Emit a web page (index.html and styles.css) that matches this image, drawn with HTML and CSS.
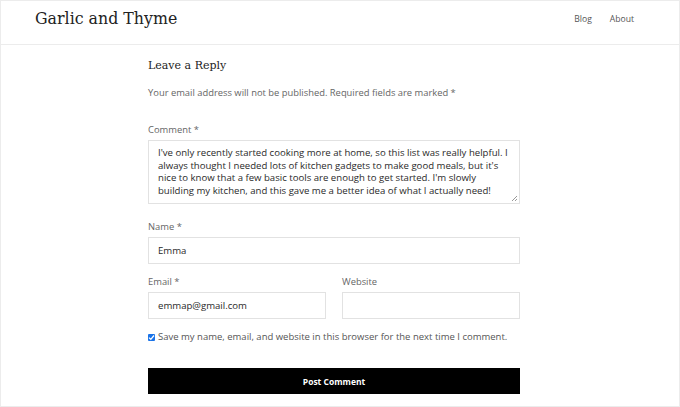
FILE: index.html
```html
<!DOCTYPE html>
<html lang="en">
<head>
<meta charset="utf-8">
<title>Garlic and Thyme</title>
<link rel="stylesheet" href="styles.css">
</head>
<body>
<div class="frame">
  <header class="site-header">
    <div class="site-title">Garlic and Thyme</div>
    <nav class="nav">
      <a href="#">Blog</a>
      <a href="#">About</a>
    </nav>
  </header>
  <main class="content">
    <h3 class="reply-title">Leave a Reply</h3>
    <p class="notes">Your email address will not be published. Required fields are marked *</p>
    <form class="comment-form">
      <div class="field">
        <label class="label">Comment *</label>
        <div class="textarea">I've only recently started cooking more at home, so this list was really helpful. I always thought I needed lots of kitchen gadgets to make good meals, but it's nice to know that a few basic tools are enough to get started. I'm slowly building my kitchen, and this gave me a better idea of what I actually need!<svg class="grip" width="7" height="7" viewBox="0 0 7 7"><path d="M6 1L1 6M6 4L4 6" stroke="#999" stroke-width="1"/></svg></div>
      </div>
      <div class="field name-field">
        <label class="label">Name *</label>
        <div class="input">Emma</div>
      </div>
      <div class="row">
        <div class="field">
          <label class="label">Email *</label>
          <div class="input">emmap@gmail.com</div>
        </div>
        <div class="field">
          <label class="label">Website</label>
          <div class="input"></div>
        </div>
      </div>
      <label class="consent"><span class="check"><svg width="7" height="7" viewBox="0 0 7 7"><path d="M1 3.6L2.8 5.3L6 1.5" stroke="#fff" stroke-width="1.3" fill="none"/></svg></span>Save my name, email, and website in this browser for the next time I comment.</label>
      <div class="button">Post Comment</div>
    </form>
  </main>
</div>
</body>
</html>
```
FILE: styles.css
```css
* { box-sizing: border-box; }
html, body { margin: 0; padding: 0; background: #fff; }
body { font-family: "Open Sans", sans-serif; color: #333; }
.frame {
  width: 680px;
  height: 407px;
  border: 1px solid #ececec;
  overflow: hidden;
}
.site-header {
  height: 44px;
  border-bottom: 1px solid #ececec;
  display: flex;
  align-items: center;
  justify-content: space-between;
  padding: 0 45px 0 34px;
}
.site-title {
  font-family: "DejaVu Serif", serif;
  font-size: 15.8px;
  color: #222;
  margin-top: -8px;
}
.nav { display: flex; gap: 18px; margin-top: -8px; }
.nav a { font-size: 8.6px; color: #555; text-decoration: none; }
.content { width: 372px; margin: 0 0 0 147px; }
.reply-title {
  font-family: "DejaVu Serif", serif;
  font-weight: normal;
  font-size: 11px;
  color: #222;
  margin: 14px 0 0;
  line-height: 14px;
}
.notes { font-size: 9.4px; color: #666; margin: 13px 0 0; line-height: 14px; }
.comment-form { margin-top: 23px; display: flex; flex-direction: column; }
.field { display: flex; flex-direction: column; }
.label { font-size: 9.4px; color: #666; line-height: 14px; margin-bottom: 3px; }
.textarea {
  position: relative;
  height: 64px;
  border: 1px solid #e2e2e2;
  padding: 6px 9px;
  font-size: 9.6px;
  line-height: 12.7px;
  color: #2a2a2a;
}
.grip { position: absolute; right: 1px; bottom: 1px; }
.name-field { margin-top: 16px; }
.input {
  height: 27px;
  border: 1px solid #e2e2e2;
  padding: 0 9px;
  font-size: 9.6px;
  line-height: 25px;
  color: #2a2a2a;
}
.row { display: grid; grid-template-columns: 1fr 1fr; gap: 16px; margin-top: 11px; }
.consent {
  display: flex;
  align-items: center;
  gap: 3px;
  margin-top: 11px;
  font-size: 9.5px;
  color: #555;
  line-height: 14px;
}
.check {
  width: 7px; height: 7px; background: #1a73e8; border-radius: 1px;
  display: inline-flex; align-items: center; justify-content: center;
}
.button {
  margin-top: 24px;
  height: 26px;
  background: #000;
  color: #fff;
  font-weight: bold;
  font-size: 8.5px;
  display: flex;
  align-items: center;
  justify-content: center;
}
```
